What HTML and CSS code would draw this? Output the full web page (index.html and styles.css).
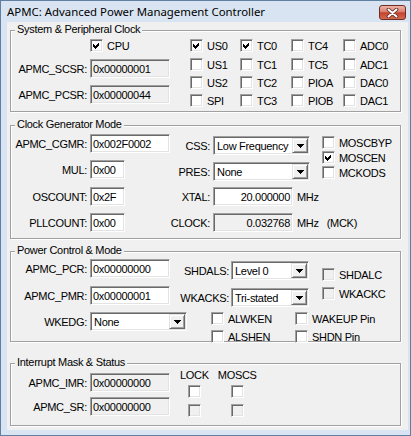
FILE: index.html
```html
<!DOCTYPE html>
<html>
<head>
<meta charset="utf-8">
<title>APMC</title>
<link rel="stylesheet" href="styles.css">
</head>
<body>
<div class="window">
  <div class="titlebar">
    <span class="title">APMC: Advanced Power Management Controller</span>
    <span class="close"><svg width="13" height="10" viewBox="0 0 13 10"><path d="M2.5 1.5 L10.5 8.5 M10.5 1.5 L2.5 8.5" stroke="#5a2a22" stroke-width="3.6" stroke-linecap="round"/><path d="M2.5 1.5 L10.5 8.5 M10.5 1.5 L2.5 8.5" stroke="#fff" stroke-width="2" stroke-linecap="round"/></svg></span>
  </div>
  <div class="client">

    <div class="group g1">
      <div class="gtitle">System &amp; Peripheral Clock</div>
      <div class="g1-body">
        <div class="g1-left">
          <span class="cb cpu"><span class="box"><svg class="tick" viewBox="0 0 9 9"><path d="M1 3 L3 5 L7 1 L7 4 L3 8 L1 6 Z"/></svg></span>CPU</span>
          <div class="field"><span class="lbl">APMC_SCSR:</span><span class="edit ro w80">0x00000001</span></div>
          <div class="field"><span class="lbl">APMC_PCSR:</span><span class="edit ro w80">0x00000044</span></div>
        </div>
        <div class="periph">
          <span class="cb"><span class="box"><svg class="tick" viewBox="0 0 9 9"><path d="M1 3 L3 5 L7 1 L7 4 L3 8 L1 6 Z"/></svg></span>US0</span>
          <span class="cb"><span class="box"><svg class="tick" viewBox="0 0 9 9"><path d="M1 3 L3 5 L7 1 L7 4 L3 8 L1 6 Z"/></svg></span>TC0</span>
          <span class="cb"><span class="box"></span>TC4</span>
          <span class="cb"><span class="box"></span>ADC0</span>
          <span class="cb"><span class="box"></span>US1</span>
          <span class="cb"><span class="box"></span>TC1</span>
          <span class="cb"><span class="box"></span>TC5</span>
          <span class="cb"><span class="box"></span>ADC1</span>
          <span class="cb"><span class="box"></span>US2</span>
          <span class="cb"><span class="box"></span>TC2</span>
          <span class="cb"><span class="box"></span>PIOA</span>
          <span class="cb"><span class="box"></span>DAC0</span>
          <span class="cb"><span class="box"></span>SPI</span>
          <span class="cb"><span class="box"></span>TC3</span>
          <span class="cb"><span class="box"></span>PIOB</span>
          <span class="cb"><span class="box"></span>DAC1</span>
        </div>
      </div>
    </div>

    <div class="group g2">
      <div class="gtitle">Clock Generator Mode</div>
      <div class="g2-body">
        <span class="lbl">APMC_CGMR:</span>
        <span class="edit w80">0x002F0002</span>
        <span class="lbl lbl-c">CSS:</span>
        <div class="combo w97 cmb-c"><span class="ctext">Low Frequency</span><span class="cbtn"><svg width="7" height="4" viewBox="0 0 7 4"><path d="M0 0h7v1H0zM1 1h5v1H1zM2 2h3v1H2zM3 3h1v1H3z"/></svg></span></div>
        <div class="side-cbs">
          <span class="cb"><span class="box"></span>MOSCBYP</span>
          <span class="cb"><span class="box"><svg class="tick" viewBox="0 0 9 9"><path d="M1 3 L3 5 L7 1 L7 4 L3 8 L1 6 Z"/></svg></span>MOSCEN</span>
          <span class="cb"><span class="box"></span>MCKODS</span>
        </div>

        <span class="lbl">MUL:</span>
        <span class="edit w35">0x00</span>
        <span class="lbl lbl-p">PRES:</span>
        <div class="combo w97 cmb-p"><span class="ctext">None</span><span class="cbtn"><svg width="7" height="4" viewBox="0 0 7 4"><path d="M0 0h7v1H0zM1 1h5v1H1zM2 2h3v1H2zM3 3h1v1H3z"/></svg></span></div>

        <span class="lbl">OSCOUNT:</span>
        <span class="edit w35">0x2F</span>
        <span class="lbl">XTAL:</span>
        <span class="unit-row"><span class="edit w80 num">20.000000</span><span class="unit">MHz</span></span>

        <span class="lbl">PLLCOUNT:</span>
        <span class="edit w35">0x00</span>
        <span class="lbl">CLOCK:</span>
        <span class="unit-row"><span class="edit ro w80 num">0.032768</span><span class="unit">MHz</span><span class="mck">(MCK)</span></span>
      </div>
    </div>

    <div class="group g3">
      <div class="gtitle">Power Control &amp; Mode</div>
      <div class="g3-body">
        <div class="g3-top">
          <span class="lbl">APMC_PCR:</span>
          <span class="edit w80">0x00000000</span>
          <span class="lbl lbl-s">SHDALS:</span>
          <div class="combo w78 cmb-s"><span class="ctext">Level 0</span><span class="cbtn"><svg width="7" height="4" viewBox="0 0 7 4"><path d="M0 0h7v1H0zM1 1h5v1H1zM2 2h3v1H2zM3 3h1v1H3z"/></svg></span></div>
          <span class="cb dis shdalc"><span class="box"></span>SHDALC</span>

          <span class="lbl">APMC_PMR:</span>
          <span class="edit w80">0x00000001</span>
          <span class="lbl lbl-s">WKACKS:</span>
          <div class="combo w78 cmb-s"><span class="ctext">Tri-stated</span><span class="cbtn"><svg width="7" height="4" viewBox="0 0 7 4"><path d="M0 0h7v1H0zM1 1h5v1H1zM2 2h3v1H2zM3 3h1v1H3z"/></svg></span></div>
          <span class="cb dis wkackc"><span class="box"></span>WKACKC</span>
        </div>
        <div class="g3-bottom">
          <span class="lbl w79">WKEDG:</span>
          <div class="combo w97"><span class="ctext">None</span><span class="cbtn"><svg width="7" height="4" viewBox="0 0 7 4"><path d="M0 0h7v1H0zM1 1h5v1H1zM2 2h3v1H2zM3 3h1v1H3z"/></svg></span></div>
          <div class="cb-col col-al">
            <span class="cb"><span class="box"></span>ALWKEN</span>
            <span class="cb"><span class="box"></span>ALSHEN</span>
          </div>
          <div class="cb-col">
            <span class="cb"><span class="box"></span>WAKEUP Pin</span>
            <span class="cb"><span class="box"></span>SHDN Pin</span>
          </div>
        </div>
      </div>
    </div>

    <div class="group g4">
      <div class="gtitle">Interrupt Mask &amp; Status</div>
      <div class="g4-body">
        <div class="g4-left">
          <div class="field"><span class="lbl w79">APMC_IMR:</span><span class="edit ro w80">0x00000000</span></div>
          <div class="field"><span class="lbl w79">APMC_SR:</span><span class="edit ro w80">0x00000000</span></div>
        </div>
        <div class="status">
          <div class="scol"><span class="shead">LOCK</span><span class="box"></span><span class="box disbox"></span></div>
          <div class="scol"><span class="shead">MOSCS</span><span class="box"></span><span class="box disbox"></span></div>
        </div>
      </div>
    </div>

  </div>
</div>
</body>
</html>
```

FILE: styles.css
```css
* { box-sizing: border-box; }

body {
  margin: 0;
  font-family: "Liberation Sans", Arial, sans-serif;
  font-size: 11px;
  letter-spacing: -0.3px;
  color: #000;
}

.window {
  width: 411px;
  height: 436px;
  background: #d8e4f1;
  border: 1px solid #61809f;
  display: flex;
  flex-direction: column;
}

.titlebar {
  flex: none;
  height: 21px;
  display: flex;
  justify-content: space-between;
  align-items: flex-start;
  padding: 0 4px 0 6px;
}

.title {
  font-family: "Noto Sans", sans-serif;
  font-size: 11.4px;
  letter-spacing: 0;
  line-height: 16px;
  margin-top: 3px;
}

.close {
  width: 27px;
  height: 15px;
  margin-top: 4px;
  border: 1px solid #6e2c24;
  border-radius: 3px;
  background: linear-gradient(#eeb5a8 0%, #d9806f 45%, #c4422e 52%, #d5694f 100%);
  display: flex;
  align-items: center;
  justify-content: center;
}

.close svg { display: block; }

.client {
  flex: none;
  height: 408px;
  margin: 0 2px 0 6px;
  background: #f0f0f0;
  padding: 8px 0 0 3px;
}

.group {
  width: 391px;
  border: 1px solid #a0a0a0;
  box-shadow: inset 1px 1px #fff, 1px 1px #fff;
}

.gtitle {
  width: max-content;
  height: 13px;
  line-height: 13px;
  margin: -8px 0 -5px 4px;
  padding: 0 2px;
  background: #f0f0f0;
  white-space: nowrap;
}

.g1 { height: 82px; margin-bottom: 13px; }
.g2 { height: 114px; margin-bottom: 12px; }
.g3 { height: 91px; margin-bottom: 21px; }
.g4 { height: 63px; }

/* common controls */
.lbl {
  height: 19px;
  display: flex;
  align-items: center;
  justify-content: flex-end;
  padding-right: 3px;
  white-space: nowrap;
}

.w79 { width: 79px; flex: none; }
.w80 { width: 80px; }
.w35 { width: 35px; }
.w97 { width: 97px; }
.w78 { width: 78px; }

.field {
  display: flex;
  align-items: center;
  height: 19px;
}

.field .lbl { width: 79px; flex: none; }

.edit {
  height: 19px;
  flex: none;
  display: flex;
  align-items: center;
  padding: 0 2px;
  border: 1px solid;
  border-color: #a0a0a0 #fff #fff #a0a0a0;
  box-shadow: inset 1px 1px #696969, inset -1px -1px #e3e3e3;
  background: #fff;
  white-space: nowrap;
}

.edit.ro { background: #f0f0f0; }
.edit.num { justify-content: flex-end; padding-right: 2px; }

.cb {
  display: flex;
  align-items: center;
  height: 13px;
  white-space: nowrap;
}

.box {
  width: 13px;
  height: 13px;
  flex: none;
  display: block;
  border: 1px solid;
  border-color: #a0a0a0 #fff #fff #a0a0a0;
  box-shadow: inset 1px 1px #696969, inset -1px -1px #e3e3e3;
  background: #fff;
}

.cb .box { margin-right: 4px; }

.cb.dis .box, .disbox { background: #f0f0f0; }

.tick {
  display: block;
  width: 9px;
  height: 9px;
  margin: 1px;
  fill: #000;
  shape-rendering: crispEdges;
}

.combo {
  height: 19px;
  flex: none;
  display: flex;
  border: 1px solid;
  border-color: #a0a0a0 #fff #fff #a0a0a0;
  box-shadow: inset 1px 1px #696969, inset -1px -1px #e3e3e3;
  background: #fff;
  padding: 1px;
}

.ctext {
  flex: 1;
  display: flex;
  align-items: center;
  padding-left: 2px;
  white-space: nowrap;
}

.cbtn {
  width: 16px;
  flex: none;
  display: flex;
  align-items: center;
  justify-content: center;
  background: #f0f0f0;
  border: 1px solid;
  border-color: #e3e3e3 #696969 #696969 #e3e3e3;
  box-shadow: inset 1px 1px #fff, inset -1px -1px #a0a0a0;
}

.cbtn svg { display: block; fill: #000; }

/* group 1 */
.g1-body {
  display: flex;
  padding-top: 8px;
}

.g1-left {
  width: 179px;
  display: flex;
  flex-direction: column;
}

.cpu { margin-left: 79px; }
.g1-left .field { margin-top: 7px; }

.periph {
  display: grid;
  grid-template-columns: 50px 51px 52px 1fr;
  grid-template-rows: 19px 18px 18px 13px;
  align-items: start;
}

/* group 2 */
.g2-body {
  display: grid;
  grid-template-columns: 79px 80px 43px 96px 1fr;
  grid-template-rows: 26px 27px 26px 19px;
  align-items: start;
  padding-top: 8px;
}

.lbl-c, .cmb-c { margin-top: 2px; }
.lbl-p, .cmb-p { margin-top: 2px; }

.side-cbs {
  grid-column: 5;
  grid-row: 1 / span 3;
  display: flex;
  flex-direction: column;
  gap: 2px;
  padding: 2px 0 0 13px;
}

.unit-row {
  display: flex;
  align-items: center;
  height: 19px;
}

.unit { margin-left: 4px; }
.mck { margin-left: 8px; }

/* group 3 */
.g3-body { padding-top: 7px; }

.g3-top {
  display: grid;
  grid-template-columns: 79px 80px 61px 78px 1fr;
  grid-template-rows: 27px 26px;
  align-items: start;
}

.lbl-s, .cmb-s { margin-top: 2px; }
.lbl-s { padding-right: 2px; }

.shdalc { margin: 9px 0 0 13px; }
.wkackc { margin: 1px 0 0 13px; }

.g3-bottom {
  display: flex;
  align-items: flex-start;
}

.cb-col {
  display: flex;
  flex-direction: column;
  gap: 5px;
}

.col-al { margin-left: 24px; width: 84px; }

/* group 4 */
.g4-body {
  display: flex;
  padding-top: 9px;
}

.g4-left {
  display: flex;
  flex-direction: column;
  gap: 5px;
}

.status {
  display: flex;
  gap: 9px;
  margin: -4px 0 0 10px;
}

.scol {
  display: flex;
  flex-direction: column;
  align-items: center;
}

.shead { height: 13px; line-height: 13px; margin-bottom: 3px; }
.scol .box + .box { margin-top: 6px; }
```
